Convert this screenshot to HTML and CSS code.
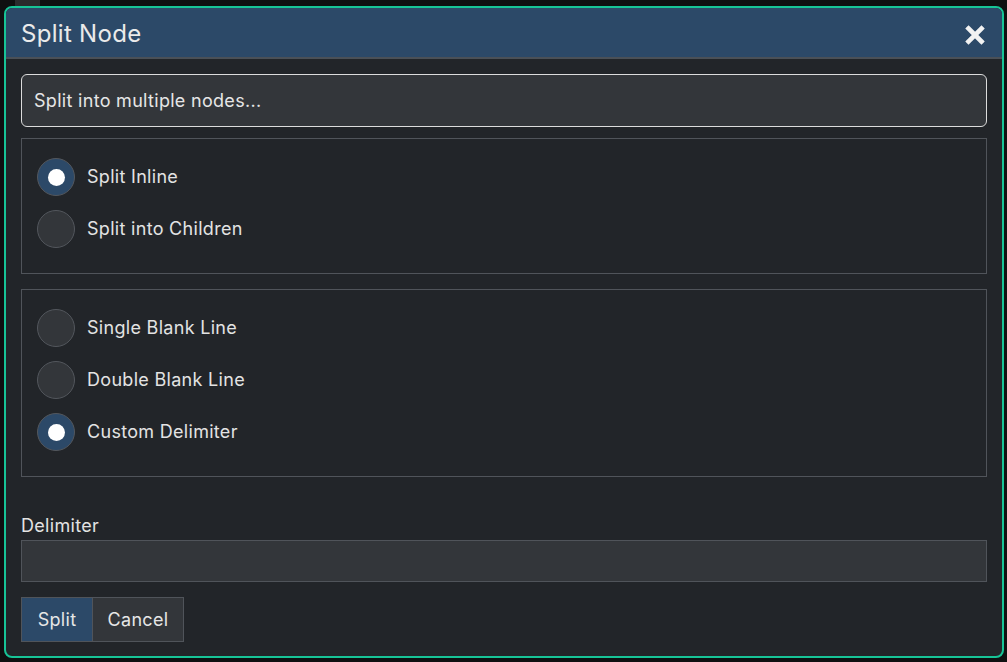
FILE: index.html
```html
<!DOCTYPE html>
<html>
<head>
<meta charset="utf-8">
<link rel="stylesheet" href="styles.css">
</head>
<body>
<div class="backdrop-strip"></div>
<div class="dialog">
  <div class="dialog-header">
    <h1 class="dialog-title">Split Node</h1>
    <button class="close-btn" aria-label="Close">
      <svg width="20" height="20" viewBox="0 0 20 20"><path d="M3.5 3.5 L16.5 16.5 M16.5 3.5 L3.5 16.5" stroke="#f2f2f2" stroke-width="4.6" stroke-linecap="square" fill="none"/></svg>
    </button>
  </div>
  <div class="dialog-body">
    <div class="prompt">Split into multiple nodes...</div>
    <div class="group group-mode">
      <label class="radio-row"><span class="radio checked"></span><span class="radio-label">Split Inline</span></label>
      <label class="radio-row"><span class="radio"></span><span class="radio-label">Split into Children</span></label>
    </div>
    <div class="group group-delim">
      <label class="radio-row"><span class="radio"></span><span class="radio-label">Single Blank Line</span></label>
      <label class="radio-row"><span class="radio"></span><span class="radio-label">Double Blank Line</span></label>
      <label class="radio-row"><span class="radio checked"></span><span class="radio-label">Custom Delimiter</span></label>
    </div>
    <div class="field-label">Delimiter</div>
    <div class="text-input"></div>
    <div class="buttons">
      <button class="btn btn-primary">Split</button>
      <button class="btn btn-secondary">Cancel</button>
    </div>
  </div>
</div>
</body>
</html>
```

FILE: styles.css
```css
html, body {
  margin: 0;
  padding: 0;
  background: #0f1011;
  font-family: Inter, "Noto Sans", "Liberation Sans", sans-serif;
  color: #e3e3e3;
  overflow: hidden;
  width: 1007px;
  height: 662px;
}

.backdrop-strip {
  position: absolute;
  left: 15px;
  top: 0;
  width: 25px;
  height: 8px;
  background: #2a2b2d;
}

.dialog {
  position: relative;
  margin: 6px 0 0 4px;
  width: 1000px;
  height: 652px;
  box-sizing: border-box;
  border: 2px solid #17c497;
  border-radius: 8px;
  background: #222529;
  overflow: hidden;
  display: flex;
  flex-direction: column;
}

.dialog-header {
  height: 49px;
  background: #2c4968;
  border-bottom: 2px solid #4a5057;
  display: flex;
  align-items: center;
  justify-content: space-between;
  padding: 0 17px 0 15px;
  flex-shrink: 0;
}

.dialog-title {
  margin: 0;
  font-size: 24px;
  font-weight: 400;
  color: #eaeaea;
  letter-spacing: 0.3px;
  padding-top: 2px;
}

.close-btn {
  background: none;
  border: none;
  padding: 0;
  margin-top: 5px;
  width: 20px;
  height: 20px;
  display: flex;
}

.dialog-body {
  padding: 15px 15px 0 15px;
  display: flex;
  flex-direction: column;
  font-size: 18px;
  letter-spacing: 0.3px;
}

.prompt {
  height: 53px;
  box-sizing: border-box;
  border: 1px solid #dcdcdc;
  border-radius: 6px;
  background: #33363a;
  padding: 0 12px;
  display: flex;
  align-items: center;
  color: #e6e6e6;
}

.group {
  margin-top: 11px;
  border: 1px solid #50545a;
  padding: 19px 15px 25px 15px;
  display: flex;
  flex-direction: column;
  gap: 14px;
}

.group-delim {
  margin-top: 15px;
}

.radio-row {
  display: flex;
  align-items: center;
  gap: 12px;
  height: 38px;
}

.radio {
  width: 38px;
  height: 38px;
  box-sizing: border-box;
  border-radius: 50%;
  border: 1px solid #53575d;
  background: #33363a;
  display: flex;
  align-items: center;
  justify-content: center;
  flex-shrink: 0;
}

.radio.checked {
  background: #2c4968;
}

.radio.checked::after {
  content: "";
  width: 17px;
  height: 17px;
  border-radius: 50%;
  background: #ffffff;
}

.radio-label {
  color: #e3e3e3;
  padding-bottom: 2px;
}

.field-label {
  margin-top: 37px;
  height: 24px;
  line-height: 24px;
  color: #e3e3e3;
}

.text-input {
  margin-top: 2px;
  height: 42px;
  box-sizing: border-box;
  border: 1px solid #50545a;
  background: #33363a;
}

.buttons {
  margin-top: 15px;
  display: flex;
}

.btn {
  height: 45px;
  box-sizing: border-box;
  border: 1px solid #50545a;
  font-family: inherit;
  font-size: 18px;
  letter-spacing: 0.3px;
  color: #e6e6e6;
  margin: 0;
  padding: 0;
}

.btn-primary {
  background: #2c4968;
  width: 71px;
  border-right: none;
}

.btn-secondary {
  background: #33363a;
  width: 92px;
}
```
